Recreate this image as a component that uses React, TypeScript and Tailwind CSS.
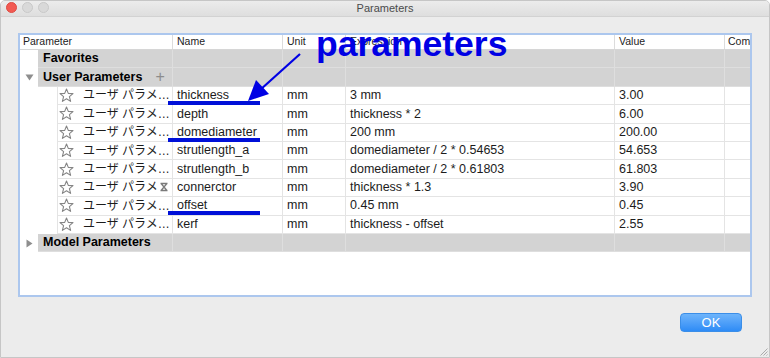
import React from 'react'

const COLS = ['w-[153px]', 'w-[110px]', 'w-[63px]', 'w-[269px]', 'w-[110px]', 'w-[25px]']

const ROWS = [
  { name: 'thickness', unit: 'mm', expr: '3 mm', value: '3.00' },
  { name: 'depth', unit: 'mm', expr: 'thickness * 2', value: '6.00' },
  { name: 'domediameter', unit: 'mm', expr: '200 mm', value: '200.00' },
  { name: 'strutlength_a', unit: 'mm', expr: 'domediameter / 2 * 0.54653', value: '54.653' },
  { name: 'strutlength_b', unit: 'mm', expr: 'domediameter / 2 * 0.61803', value: '61.803' },
  { name: 'connerctor', unit: 'mm', expr: 'thickness * 1.3', value: '3.90', busy: true },
  { name: 'offset', unit: 'mm', expr: '0.45 mm', value: '0.45' },
  { name: 'kerf', unit: 'mm', expr: 'thickness - offset', value: '2.55' },
]

function Star() {
  return (
    <svg width="15" height="15" viewBox="0 0 15 15" className="shrink-0">
      <polygon
        points="7.5,1 9.3,5.4 14,5.6 10.4,8.7 11.6,13.4 7.5,10.8 3.4,13.4 4.6,8.7 1,5.6 5.7,5.4"
        fill="none"
        stroke="#858585"
        strokeWidth="1.1"
        strokeLinejoin="round"
      />
    </svg>
  )
}

function Busy() {
  return (
    <svg width="10" height="10" viewBox="0 0 10 10" className="ml-[1px]">
      <path d="M1.5 1.5h7M1.5 8.5h7M2.5 2l5 6M7.5 2l-5 6" stroke="#7a7a7a" strokeWidth="1.3" fill="none" />
    </svg>
  )
}

function GroupRow({ label, arrow, plus }: { label: string; arrow?: 'down' | 'right'; plus?: boolean }) {
  return (
    <div className="flex h-[18.4px] shrink-0">
      <div className="w-[18px] flex items-center justify-center bg-white">
        {arrow === 'down' && (
          <svg width="9" height="7" viewBox="0 0 9 7">
            <polygon points="0.5,0.5 8.5,0.5 4.5,6.5" fill="#8e8e8e" />
          </svg>
        )}
        {arrow === 'right' && (
          <svg width="7" height="9" viewBox="0 0 7 9">
            <polygon points="0.5,0.5 6.5,4.5 0.5,8.5" fill="#8e8e8e" />
          </svg>
        )}
      </div>
      <div className="w-[135px] flex items-center bg-[#d3d3d3] border-r border-b border-[#dedede] pl-[5px] font-bold text-[12.5px] text-black">
        {label}
        {plus && <span className="ml-[13px] text-[#8c8c8c] font-normal text-[16px] leading-none">+</span>}
      </div>
      {COLS.slice(1).map((c, i) => (
        <div key={i} className={`${c} bg-[#d3d3d3] border-b border-[#dedede] ${i < 4 ? 'border-r' : ''}`} />
      ))}
    </div>
  )
}

export default function App() {
  return (
    <div className="relative w-[770px] h-[358px] overflow-hidden bg-[#ececec] border border-[#c6c6c6] rounded-t-[5px] flex flex-col font-['Liberation_Sans','Noto_Sans_CJK_JP',sans-serif] text-[#1c1c1c]">
      {/* title bar */}
      <div className="relative h-[16px] shrink-0 bg-gradient-to-b from-[#ececec] to-[#dedede] border-b border-[#d2d2d2] flex items-center justify-center">
        <div className="absolute left-[5px] top-[1px] flex gap-[5px]">
          <span className="w-[11px] h-[11px] rounded-full bg-[#f25a52] border border-[#de4a42]" />
          <span className="w-[11px] h-[11px] rounded-full bg-[#d9d9d9] border border-[#c8c8c8]" />
          <span className="w-[11px] h-[11px] rounded-full bg-[#d9d9d9] border border-[#c8c8c8]" />
        </div>
        <span className="text-[11px] text-[#4b4b4b]">Parameters</span>
      </div>

      {/* table */}
      <div className="mt-[16px] ml-[17px] w-[734px] h-[264px] shrink-0 border-2 border-[#acc7ee] bg-white flex flex-col overflow-hidden">
        <div className="flex h-[15px] shrink-0 border-b border-[#d6d6d6] text-[10.5px] text-[#222]">
          {['Parameter', 'Name', 'Unit', 'Expression', 'Value', 'Com'].map((h, i) => (
            <div
              key={h}
              className={`${COLS[i]} flex items-center overflow-hidden whitespace-nowrap ${i === 0 ? 'pl-[3px]' : i === 5 ? 'pl-[3px]' : 'pl-[4px]'} ${i < 5 ? 'border-r border-[#dcdcdc]' : ''}`}
            >
              {h}
            </div>
          ))}
        </div>

        <GroupRow label="Favorites" />
        <GroupRow label="User Parameters" arrow="down" plus />

        {ROWS.map((r) => (
          <div key={r.name} className="flex h-[18.4px] shrink-0 text-[12.5px]">
            <div className="w-[37px] shrink-0" />
            <div className="w-[116px] flex items-center border-l border-r border-b border-[#e4e4e4] pl-[1px] whitespace-nowrap overflow-hidden">
              <Star />
              <span className="ml-[9px] text-[12px] flex items-center">
                ユーザ パラメ{r.busy ? <Busy /> : '…'}
              </span>
            </div>
            <div className="w-[110px] flex items-center pl-[4px] border-r border-b border-[#e4e4e4]">{r.name}</div>
            <div className="w-[63px] flex items-center pl-[4px] border-r border-b border-[#e4e4e4]">{r.unit}</div>
            <div className="w-[269px] flex items-center pl-[4px] border-r border-b border-[#e4e4e4]">{r.expr}</div>
            <div className="w-[110px] flex items-center pl-[4px] border-r border-b border-[#e4e4e4]">{r.value}</div>
            <div className="w-[25px] border-b border-[#e4e4e4]" />
          </div>
        ))}

        <GroupRow label="Model Parameters" arrow="right" />
      </div>

      {/* footer */}
      <div className="flex justify-end mt-[16px] pr-[27px]">
        <button className="w-[62px] h-[19px] rounded-[4px] bg-gradient-to-b from-[#6db4fb] to-[#2d8bf6] border border-[#3b8ee8] text-white text-[13px] leading-none flex items-center justify-center">
          OK
        </button>
      </div>

      {/* resize grip */}
      <svg className="absolute right-[1px] bottom-[1px]" width="10" height="10" viewBox="0 0 10 10">
        <path d="M9.5 2.5L2.5 9.5M9.5 5.5L5.5 9.5M9.5 8.5L8.5 9.5" stroke="#9a9a9a" strokeWidth="0.8" />
      </svg>

      {/* annotations */}
      <span className="absolute left-[315px] top-[26px] text-[35.5px] leading-none font-bold text-[#0000e4] font-['Liberation_Sans',sans-serif]">
        parameters
      </span>
      <svg className="absolute left-[239px] top-[49px]" width="64" height="56" viewBox="0 0 64 56">
        <line x1="60" y1="4" x2="20" y2="40" stroke="#0000e4" strokeWidth="2.2" />
        <polygon points="8,51 29,44 16,30" fill="#0000e4" />
      </svg>
      <div className="absolute left-[167px] top-[100px] w-[92px] h-[4px] bg-[#0010d8]" />
      <div className="absolute left-[167px] top-[137px] w-[92px] h-[4px] bg-[#0010d8]" />
      <div className="absolute left-[167px] top-[210px] w-[92px] h-[4px] bg-[#0010d8]" />
    </div>
  )
}
